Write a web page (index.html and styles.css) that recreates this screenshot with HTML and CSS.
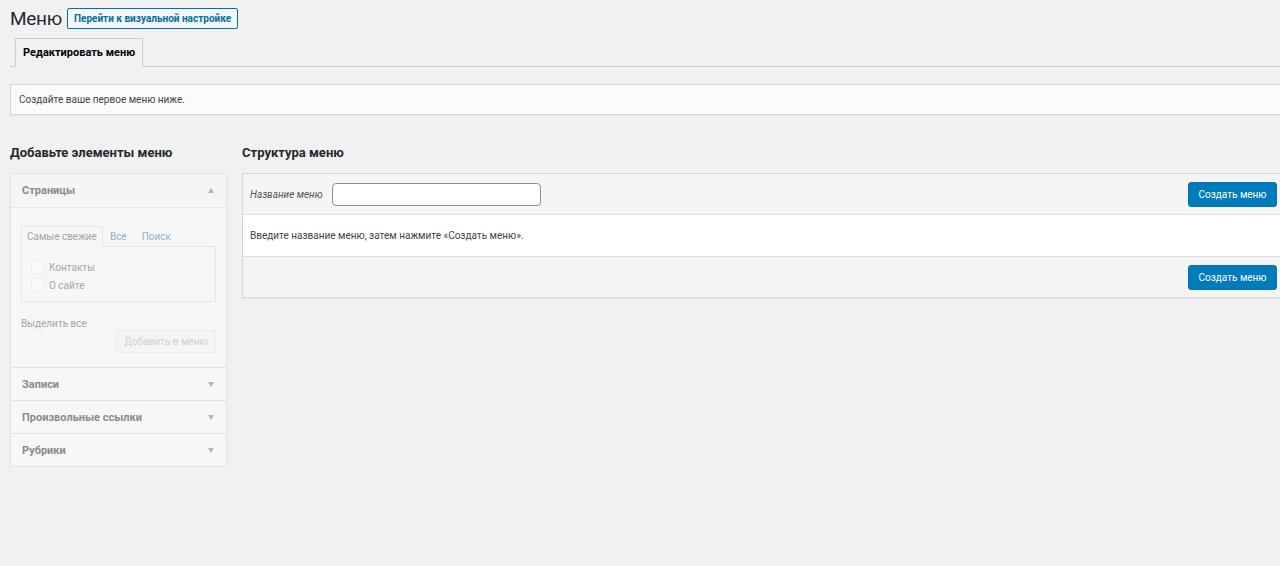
FILE: index.html
```html
<!DOCTYPE html>
<html lang="ru">
<head>
  <meta charset="UTF-8">
  <meta name="viewport" content="width=device-width, initial-scale=1.0">
  <title>Меню</title>
  <link rel="stylesheet" href="styles.css">
</head>
<body>

<div class="wrap">

  <!-- Page title -->
  <div class="title-row">
    <h1>Меню</h1>
    <a class="page-title-action" href="#">Перейти к визуальной настройке</a>
  </div>

  <div class="nav-tabs">
    <a class="nav-tab active" href="#">Редактировать меню</a>
  </div>

  <div class="notice">
    <p>Создайте ваше первое меню ниже.</p>
  </div>

  <div class="columns">

    <!-- Left column: add items (disabled until a menu exists) -->
    <div class="col-left">
      <h2>Добавьте элементы меню</h2>
      <div class="accordion">
        <div class="acc-section open">
          <div class="acc-title">Страницы <span class="arrow up"></span></div>
          <div class="acc-content">
            <div class="inner-tabs">
              <span class="inner-tab active">Самые свежие</span>
              <span class="inner-tab link">Все</span>
              <span class="inner-tab link">Поиск</span>
            </div>
            <div class="tab-panel">
              <label class="check"><span class="box"></span>Контакты</label>
              <label class="check"><span class="box"></span>О сайте</label>
            </div>
            <div class="select-all">Выделить все</div>
            <div class="add-row">
              <button class="btn-disabled">Добавить в меню</button>
            </div>
          </div>
        </div>
        <div class="acc-section">
          <div class="acc-title">Записи <span class="arrow"></span></div>
        </div>
        <div class="acc-section">
          <div class="acc-title">Произвольные ссылки <span class="arrow"></span></div>
        </div>
        <div class="acc-section">
          <div class="acc-title">Рубрики <span class="arrow"></span></div>
        </div>
      </div>
    </div>

    <!-- Right column: menu structure -->
    <div class="col-right">
      <h2>Структура меню</h2>
      <div class="menu-box">
        <div class="menu-header">
          <label class="menu-name-label">Название меню</label>
          <input class="menu-name" type="text">
          <button class="btn-primary">Создать меню</button>
        </div>
        <div class="menu-body">
          <p>Введите название меню, затем нажмите «Создать меню».</p>
        </div>
        <div class="menu-footer">
          <button class="btn-primary">Создать меню</button>
        </div>
      </div>
    </div>

  </div>
</div>

</body>
</html>
```

FILE: styles.css
```css
body {
  margin: 0;
  padding: 0;
  background: #f1f1f1;
  font-family: Roboto, "Liberation Sans", Arial, sans-serif;
  font-size: 11px;
  color: #444;
  overflow: hidden;
}

.wrap {
  width: 1277px;
  padding: 3px 0 0 10px;
}

/* Title */
.title-row {
  display: flex;
  align-items: center;
  gap: 5px;
  height: 30px;
}

h1 {
  margin: 0;
  font-size: 19px;
  font-weight: 400;
  color: #23282d;
  letter-spacing: -0.3px;
}

.page-title-action {
  display: inline-block;
  padding: 0 6px;
  height: 19px;
  line-height: 19px;
  border: 1px solid #0071a1;
  border-radius: 2px;
  background: #f3f5f6;
  color: #0071a1;
  font-size: 10px;
  font-weight: 700;
  text-decoration: none;
}

/* Tabs */
.nav-tabs {
  margin-top: 5px;
  padding-left: 5px;
  border-bottom: 1px solid #ccc;
  display: flex;
}

.nav-tab {
  display: block;
  height: 27px;
  line-height: 27px;
  padding: 0 7px;
  border: 1px solid #ccc;
  border-bottom: none;
  margin-bottom: -1px;
  background: #f1f1f1;
  color: #000;
  font-size: 11px;
  font-weight: 700;
  text-decoration: none;
}

.nav-tab.active {
  border-bottom: 1px solid #f1f1f1;
}

/* Notice */
.notice {
  margin-top: 17px;
  background: #fbfbfb;
  border: 1px solid #d5d5d5;
  box-shadow: 0 1px 1px rgba(0,0,0,0.04);
  height: 29px;
  display: flex;
  align-items: center;
  padding-left: 8px;
}

.notice p {
  margin: 0;
  font-size: 10px;
  color: #444;
}

/* Columns */
.columns {
  display: flex;
  gap: 15px;
  margin-top: 27px;
}

h2 {
  margin: 0;
  font-size: 13px;
  font-weight: 700;
  color: #23282d;
  height: 22px;
  line-height: 22px;
}

.col-left {
  width: 217px;
  flex-shrink: 0;
}

.col-right {
  flex: 1;
}

/* Left accordion (disabled look) */
.accordion {
  margin-top: 9px;
  border: 1px solid #e2e2e2;
  background: #f7f7f7;
  box-shadow: 0 1px 1px rgba(0,0,0,0.05);
}

.acc-section + .acc-section {
  border-top: 1px solid #e2e2e2;
}

.acc-title {
  height: 32px;
  display: flex;
  align-items: center;
  justify-content: space-between;
  padding: 0 12px 0 11px;
  font-size: 11px;
  font-weight: 700;
  color: #8a8a8a;
  background: #f7f7f7;
}

.open .acc-title {
  height: 33px;
  border-bottom: 1px solid #e6e6e6;
  background: #f5f5f5;
}

.arrow {
  width: 0;
  height: 0;
  border-left: 3.5px solid transparent;
  border-right: 3.5px solid transparent;
  border-top: 5px solid #b5b5b5;
}

.arrow.up {
  border-top: none;
  border-bottom: 5px solid #b5b5b5;
}

.acc-content {
  padding: 18px 10px 14px 10px;
  background: #f7f7f7;
}

.inner-tabs {
  display: flex;
  align-items: flex-end;
}

.inner-tab {
  padding: 0 5px 0 6px;
  height: 19px;
  line-height: 20px;
  font-size: 10px;
  color: #a6a6a6;
}

.inner-tab.active {
  border: 1px solid #e6e6e6;
  border-bottom: 1px solid #f7f7f7;
  margin-bottom: -1px;
  padding: 0 5px;
}

.inner-tab.link {
  color: #86b6d2;
  padding: 0 8px 0 7px;
}

.tab-panel {
  border: 1px solid #e6e6e6;
  padding: 11px 9px 0 9px;
  box-sizing: border-box;
  height: 56px;
}

.check {
  display: flex;
  align-items: center;
  gap: 4px;
  height: 18px;
  font-size: 10px;
  color: #a6a6a6;
}

.check .box {
  width: 12px;
  height: 12px;
  border: 1px solid #ececec;
  background: #f9f9f9;
  border-radius: 2px;
}

.select-all {
  margin-top: 16px;
  font-size: 10px;
  color: #a6a6a6;
}

.add-row {
  display: flex;
  justify-content: flex-end;
  margin-top: 1px;
}

.btn-disabled {
  width: 100px;
  height: 23px;
  border: 1px solid #ebebeb;
  border-radius: 2px;
  background: #f5f5f5;
  color: #cfcfcf;
  font-family: inherit;
  font-size: 10px;
  padding: 0;
}

/* Right column */
.menu-box {
  margin-top: 9px;
  border: 1px solid #d5d5d5;
  box-shadow: 0 1px 1px rgba(0,0,0,0.04);
  background: #fff;
}

.menu-header,
.menu-footer {
  background: #f5f5f5;
  height: 40px;
  display: flex;
  align-items: center;
  padding: 0 9px 0 7px;
}

.menu-header {
  border-bottom: 1px solid #dfdfdf;
}

.menu-footer {
  border-top: 1px solid #dfdfdf;
  justify-content: flex-end;
}

.menu-name-label {
  font-style: italic;
  font-size: 10px;
  color: #555;
  margin-right: 9px;
}

.menu-name {
  width: 209px;
  height: 23px;
  box-sizing: border-box;
  border: 1px solid #8c8f94;
  border-radius: 4px;
  background: #fff;
  margin: 0;
}

.btn-primary {
  margin-left: auto;
  width: 89px;
  height: 25px;
  padding: 0;
  border: 1px solid #0078b4;
  border-radius: 3px;
  background: #007cba;
  color: #fff;
  font-family: inherit;
  font-size: 10px;
}

.menu-body {
  height: 41px;
  display: flex;
  align-items: center;
  padding-left: 7px;
}

.menu-body p {
  margin: 0;
  font-size: 10px;
  color: #444;
}
```
